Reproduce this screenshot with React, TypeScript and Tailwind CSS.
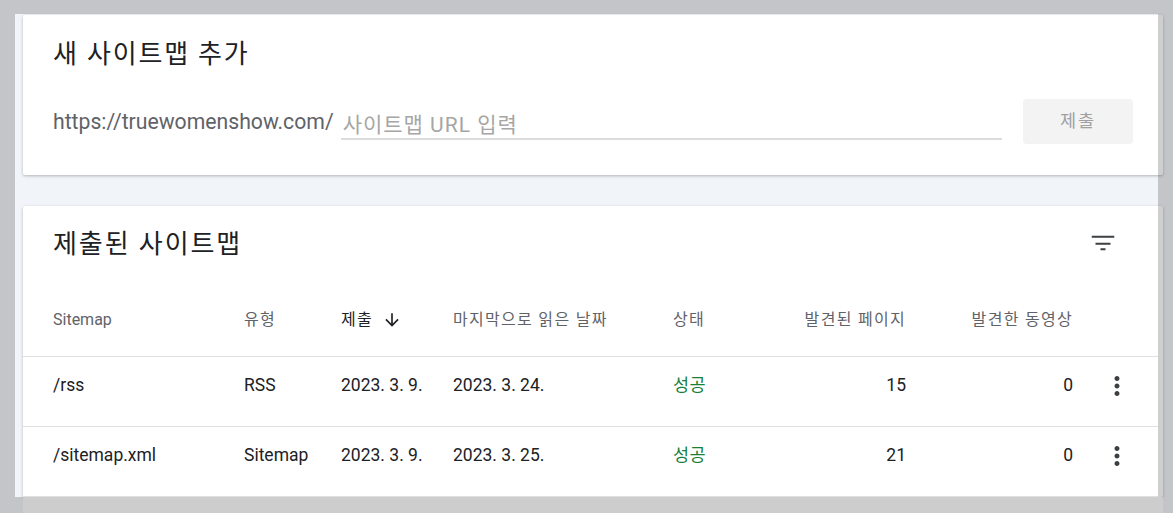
import React from "react";

const font = { fontFamily: "Roboto, 'Noto Sans CJK KR', 'Noto Sans', sans-serif" };

function FilterIcon() {
  return (
    <svg width="30" height="30" viewBox="0 0 24 24" fill="#3c4043">
      <path d="M10 17.8h4v-1.6h-4v1.6zM3 6.2v1.6h18V6.2H3zm3 5.6v1.6h12v-1.6H6z" />
    </svg>
  );
}

function MoreVert() {
  return (
    <svg width="30" height="30" viewBox="0 0 24 24" fill="#3c4043">
      <path d="M12 8c1.1 0 2-.9 2-2s-.9-2-2-2-2 .9-2 2 .9 2 2 2zm0 2c-1.1 0-2 .9-2 2s.9 2 2 2 2-.9 2-2-.9-2-2-2zm0 6c-1.1 0-2 .9-2 2s.9 2 2 2 2-.9 2-2-.9-2-2-2z" />
    </svg>
  );
}

function ArrowDown() {
  return (
    <svg width="20" height="20" viewBox="0 0 24 24" fill="#202124">
      <path d="M20 12l-1.41-1.41L13 16.17V4h-2v12.17l-5.58-5.59L4 12l8 8 8-8z" />
    </svg>
  );
}

const rows = [
  { path: "/rss", type: "RSS", submitted: "2023. 3. 9.", read: "2023. 3. 24.", status: "성공", pages: "15", videos: "0" },
  { path: "/sitemap.xml", type: "Sitemap", submitted: "2023. 3. 9.", read: "2023. 3. 25.", status: "성공", pages: "21", videos: "0" },
];

const grid = "grid grid-cols-[191px_97px_112px_220px_120px_113px_167px_20px_48px] pl-[30px]";

export default function App() {
  return (
    <div className="w-full h-[513px] overflow-hidden bg-[#c3c5c9]" style={font}>
      <div className="h-[14px]" />
      <div className="ml-[15px] w-[1143px] bg-[#f1f4f9] pt-px pl-[8px]">
        {/* Card 1 */}
        <div className="w-[1140px] h-[160px] bg-white border-r-[5px] border-[#cfcfcf] shadow-[0_1px_3px_rgba(60,64,67,0.35)] rounded-[2px] pl-[30px] pr-[25px] pt-[21px]">
          <div className="text-[26px] leading-[32px] tracking-[1.8px] text-[#202124] pt-[2px]">새 사이트맵 추가</div>
          <div className="mt-[29px] flex h-[45px]">
            <div className="self-center text-[21.2px] leading-[29px] text-[#5f6368] whitespace-nowrap">
              https://truewomenshow.com/
            </div>
            <div className="ml-[7px] flex-1 h-[41px] border-b-2 border-[#dcdcdc]">
              <input
                className="w-full h-[39px] pt-[12px] pl-[2px] bg-transparent outline-none text-[21px] leading-[27px] tracking-[1px] text-[#202124] placeholder:text-[#a6a6a6]"
                style={font}
                placeholder="사이트맵 URL 입력"
              />
            </div>
            <button
              className="ml-[21px] w-[110px] h-[45px] rounded-[4px] bg-[#f3f3f3] text-[17.5px] tracking-[2px] text-[#a0a0a0]"
              style={font}
            >
              제출
            </button>
          </div>
        </div>

        <div className="h-[31px]" />

        {/* Card 2 */}
        <div className="w-[1140px] h-[291px] bg-white border-r-[5px] border-[#cfcfcf] shadow-[0_1px_3px_rgba(60,64,67,0.35)] rounded-[2px] pt-[21px]">
          <div className="flex items-center justify-between pl-[30px] pr-[40px] h-[32px]">
            <div className="text-[26px] leading-[32px] tracking-[1.9px] text-[#202124] pt-[2px]">제출된 사이트맵</div>
            <FilterIcon />
          </div>
          <div className={`${grid} mt-[25px] h-[73px] items-center border-b border-[#e0e0e0] text-[16px] tracking-[1.3px] text-[#5f6368]`}>
            <div className="tracking-normal">Sitemap</div>
            <div>유형</div>
            <div className="flex items-center gap-[9px] text-[#202124]">
              <span>제출</span>
              <ArrowDown />
            </div>
            <div>마지막으로 읽은 날짜</div>
            <div>상태</div>
            <div className="text-right">발견된 페이지</div>
            <div className="text-right">발견한 동영상</div>
            <div />
            <div />
          </div>
          {rows.map((r) => (
            <div
              key={r.path}
              className={`${grid} h-[70px] pb-[12px] items-center border-b border-[#e0e0e0] text-[17.5px] text-[#202124]`}
            >
              <div>{r.path}</div>
              <div>{r.type}</div>
              <div>{r.submitted}</div>
              <div>{r.read}</div>
              <div className="text-[#188038] tracking-[0.5px]">{r.status}</div>
              <div className="text-right">{r.pages}</div>
              <div className="text-right">{r.videos}</div>
              <div />
              <div className="flex justify-center">
                <MoreVert />
              </div>
            </div>
          ))}
        </div>
      </div>
      <div className="ml-[23px] w-[1140px] h-[20px] bg-[#cdcdcd]" />
    </div>
  );
}
